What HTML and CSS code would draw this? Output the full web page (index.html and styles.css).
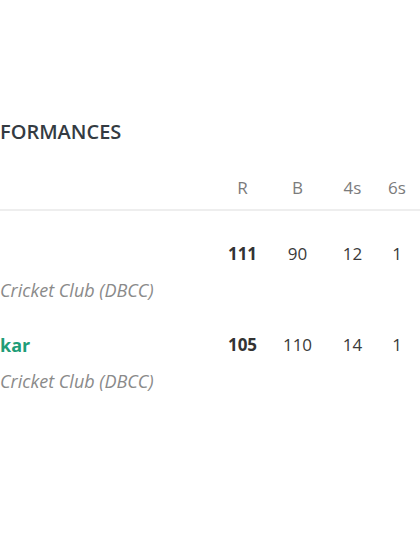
FILE: index.html
```html
<!DOCTYPE html>
<html>
<head>
<meta charset="utf-8">
<link rel="stylesheet" href="styles.css">
</head>
<body>
<section class="perf">
  <h2 class="title">FORMANCES</h2>
  <div class="table">
    <div class="row head">
      <div class="name"></div>
      <div class="c">R</div>
      <div class="c">B</div>
      <div class="c">4s</div>
      <div class="c">6s</div>
    </div>
    <div class="row">
      <div class="name"><div class="player">&nbsp;</div><div class="club">Cricket Club (DBCC)</div></div>
      <div class="c runs">111</div>
      <div class="c">90</div>
      <div class="c">12</div>
      <div class="c">1</div>
    </div>
    <div class="row">
      <div class="name"><div class="player">kar</div><div class="club">Cricket Club (DBCC)</div></div>
      <div class="c runs">105</div>
      <div class="c">110</div>
      <div class="c">14</div>
      <div class="c">1</div>
    </div>
  </div>
</section>
</body>
</html>
```
FILE: styles.css
```css
html, body {
  margin: 0;
  padding: 0;
  background: #ffffff;
}
body {
  font-family: "Open Sans", "Noto Sans", sans-serif;
  width: 420px;
  height: 560px;
  overflow: hidden;
}
.perf {
  padding-top: 118px;
}
.title {
  margin: 0;
  font-size: 20px;
  line-height: 28px;
  font-weight: 600;
  color: #343b42;
}
.table {
  margin-top: 22px;
}
.row {
  display: grid;
  grid-template-columns: 1fr 55px 55px 55px 34px;
  padding-right: 6px;
  padding-top: 31px;
  align-items: start;
}
.row.head {
  padding-top: 8px;
  padding-bottom: 9px;
  border-bottom: 2px solid #eeeeee;
}
.c {
  text-align: center;
  font-size: 17px;
  line-height: 24px;
  color: #3a3a3a;
}
.head .c {
  color: #7b7b7b;
}
.runs {
  font-weight: 700;
  color: #333333;
}
.player {
  font-size: 18px;
  line-height: 24px;
  font-weight: 700;
  color: #1f9d78;
}
.club {
  margin-top: 12px;
  font-size: 18px;
  line-height: 24px;
  font-style: italic;
  color: #8a8a8a;
}
```
